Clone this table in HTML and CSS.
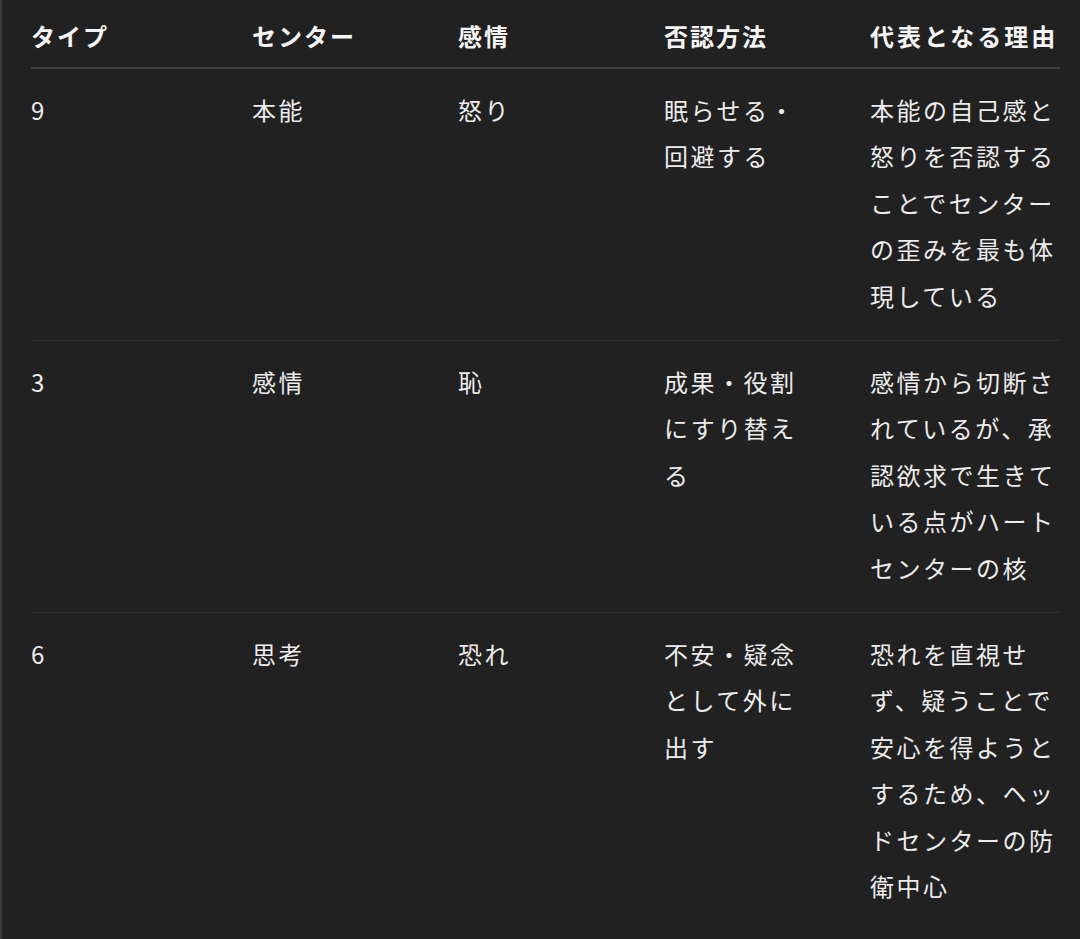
FILE: index.html
```html
<!DOCTYPE html>
<html lang="ja">
<head>
<meta charset="utf-8">
<link rel="stylesheet" href="styles.css">
</head>
<body>
<div class="page">
<table class="tbl">
<colgroup>
<col class="c1"><col class="c2"><col class="c3"><col class="c4"><col class="c5">
</colgroup>
<thead>
<tr>
<th>タイプ</th><th>センター</th><th>感情</th><th>否認方法</th><th class="last wide">代表となる理由</th>
</tr>
</thead>
<tbody>
<tr>
<td>9</td><td>本能</td><td>怒り</td><td>眠らせる・回避する</td><td class="last">本能の自己感と怒りを否認することでセンターの歪みを最も体現している</td>
</tr>
<tr>
<td>3</td><td>感情</td><td>恥</td><td>成果・役割にすり替える</td><td class="last">感情から切断されているが、承認欲求で生きている点がハートセンターの核</td>
</tr>
<tr>
<td>6</td><td>思考</td><td>恐れ</td><td>不安・疑念として外に出す</td><td class="last">恐れを直視せず、疑うことで安心を得ようとするため、ヘッドセンターの防衛中心</td>
</tr>
</tbody>
</table>
</div>
</body>
</html>
```
FILE: styles.css
```css
html, body {
  margin: 0;
  padding: 0;
}
body {
  background: #212121;
  color: #ececec;
  font-family: "Noto Sans CJK JP", "Noto Sans", sans-serif;
  width: 1080px;
  height: 939px;
  overflow: hidden;
}
.page {
  box-sizing: border-box;
  height: 939px;
  border-left: 2px solid #3b3b3b;
  padding-left: 29px;
}
.tbl {
  border-collapse: collapse;
  table-layout: fixed;
  width: 1029px;
  font-size: 24px;
  line-height: 46.5px;
  letter-spacing: 2.5px;
}
.c1 { width: 221px; }
.c2 { width: 206px; }
.c3 { width: 206px; }
.c4 { width: 206px; }
.c5 { width: 190px; }
.tbl th {
  text-align: left;
  font-weight: 700;
  color: #f4f4f4;
  padding: 13px 60px 7px 0;
  border-bottom: 2px solid #3e3e3e;
  white-space: nowrap;
  vertical-align: top;
  letter-spacing: 2px;
}
.tbl td {
  text-align: left;
  vertical-align: top;
  padding: 18px 60px 20.5px 0;
  border-bottom: 1px solid #303030;
}
.tbl tbody tr:last-child td {
  border-bottom: none;
}
.tbl .last {
  padding-right: 0;
}
.tbl th.wide {
  letter-spacing: 3px;
}
```
